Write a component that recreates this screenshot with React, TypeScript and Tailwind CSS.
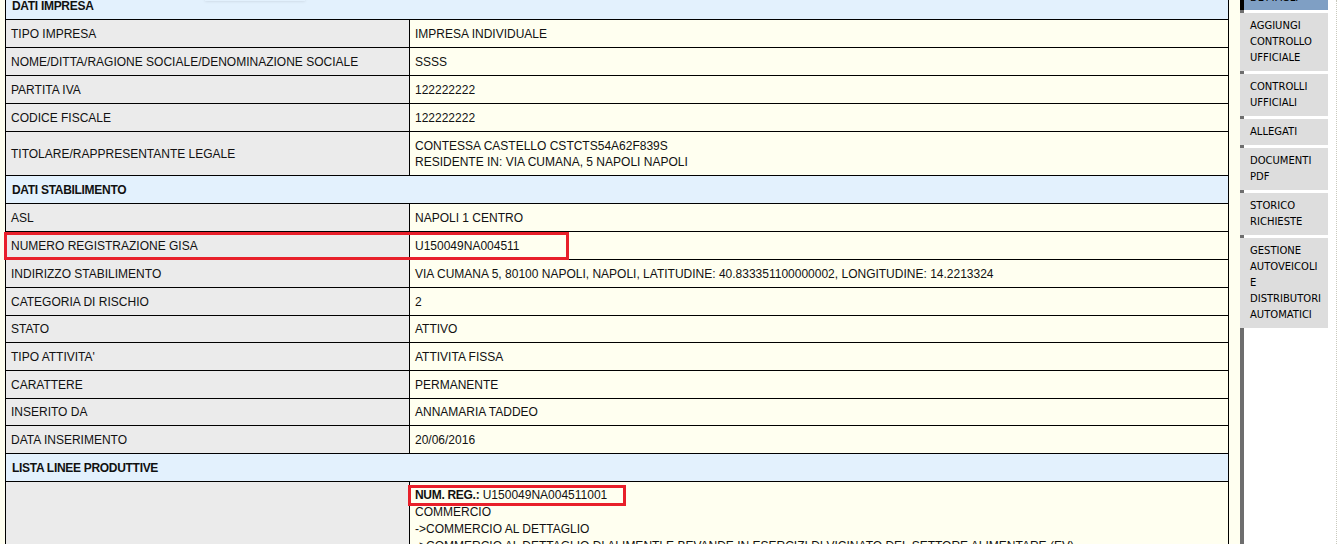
import React from "react";

type Row =
  | { kind: "head"; title: string }
  | { kind: "row"; label: string; value: React.ReactNode; h?: string };

const rows: Row[] = [
  { kind: "head", title: "DATI IMPRESA" },
  { kind: "row", label: "TIPO IMPRESA", value: "IMPRESA INDIVIDUALE" },
  { kind: "row", label: "NOME/DITTA/RAGIONE SOCIALE/DENOMINAZIONE SOCIALE", value: "SSSS" },
  { kind: "row", label: "PARTITA IVA", value: "122222222" },
  { kind: "row", label: "CODICE FISCALE", value: "122222222" },
  {
    kind: "row",
    label: "TITOLARE/RAPPRESENTANTE LEGALE",
    h: "h-[44px]",
    value: (
      <>
        CONTESSA CASTELLO CSTCTS54A62F839S
        <br />
        RESIDENTE IN: VIA CUMANA, 5 NAPOLI NAPOLI
      </>
    ),
  },
  { kind: "head", title: "DATI STABILIMENTO" },
  { kind: "row", label: "ASL", value: "NAPOLI 1 CENTRO" },
  { kind: "row", label: "NUMERO REGISTRAZIONE GISA", value: "U150049NA004511" },
  {
    kind: "row",
    label: "INDIRIZZO STABILIMENTO",
    value: "VIA CUMANA 5, 80100 NAPOLI, NAPOLI, LATITUDINE: 40.833351100000002, LONGITUDINE: 14.2213324",
  },
  { kind: "row", label: "CATEGORIA DI RISCHIO", value: "2" },
  { kind: "row", label: "STATO", value: "ATTIVO", h: "h-[27px]" },
  { kind: "row", label: "TIPO ATTIVITA'", value: "ATTIVITA FISSA" },
  { kind: "row", label: "CARATTERE", value: "PERMANENTE" },
  { kind: "row", label: "INSERITO DA", value: "ANNAMARIA TADDEO", h: "h-[27px]" },
  { kind: "row", label: "DATA INSERIMENTO", value: "20/06/2016" },
  { kind: "head", title: "LISTA LINEE PRODUTTIVE" },
];

const menu = [
  ["AGGIUNGI", "CONTROLLO", "UFFICIALE"],
  ["CONTROLLI", "UFFICIALI"],
  ["ALLEGATI"],
  ["DOCUMENTI", "PDF"],
  ["STORICO", "RICHIESTE"],
  ["GESTIONE", "AUTOVEICOLI", "E", "DISTRIBUTORI", "AUTOMATICI"],
];

const App = () => {
  return (
    <div className="relative flex h-[544px] overflow-hidden bg-[#fffff0] text-[12px] text-[#111] font-['Liberation_Sans',Arial,sans-serif]">
      {/* scheda stabilimento */}
      <div className="w-[1229px] shrink-0 pl-[5px] -mt-[9px]">
        <table className="w-full border-collapse border border-black">
          <tbody>
            {rows.map((r, i) =>
              r.kind === "head" ? (
                <tr key={i} className="h-[28px]">
                  <td
                    colSpan={2}
                    className="border border-black bg-[#e3f1fd] pl-[6px] font-bold tracking-[-0.3px] font-['Liberation_Sans_Narrow','Liberation_Sans',sans-serif] text-[12px]"
                  >
                    {r.title}
                  </td>
                </tr>
              ) : (
                <tr key={i} className={r.h ?? "h-[28px]"}>
                  <td className="w-[404px] border border-black bg-[#ebebeb] pl-[5px] leading-[16px]">
                    {r.label}
                  </td>
                  <td className="border border-black bg-[#fffff0] pl-[5px] leading-[16px]">{r.value}</td>
                </tr>
              )
            )}
            <tr>
              <td className="w-[404px] border border-black bg-[#ebebeb]" />
              <td className="border border-black bg-[#fffff0] pl-[5px] pt-[5px] leading-[17px] align-top">
                <span className="font-bold tracking-[-0.3px] font-['Liberation_Sans_Narrow','Liberation_Sans',sans-serif]">
                  NUM. REG.:
                </span>{" "}
                U150049NA004511001
                <br />
                COMMERCIO
                <br />
                -&gt;COMMERCIO AL DETTAGLIO
                <br />
                -&gt;COMMERCIO AL DETTAGLIO DI ALIMENTI E BEVANDE IN ESERCIZI DI VICINATO DEL SETTORE ALIMENTARE (EV)
              </td>
            </tr>
          </tbody>
        </table>
      </div>

      {/* menu laterale */}
      <div className="ml-[11px] flex w-[97px] shrink-0 border-l-4 border-[#6e6e6e] bg-white">
        <div className="-ml-[4px] flex w-[88px] flex-col gap-[3px] -mt-[18px] font-['DejaVu_Sans',Verdana,sans-serif] text-[10px] leading-[16px] text-black">
          <div className="border-l-4 border-black bg-[#7f9fc4] pl-[6px] pt-[8px] pb-[4px]">DETTAGLI</div>
          {menu.map((lines, i) => (
            <div key={i} className="bg-[#dddddd] pl-[10px] py-[5px]">
              {lines.map((l) => (
                <div key={l}>{l}</div>
              ))}
            </div>
          ))}
        </div>
        <div className="ml-auto w-px border-r border-dotted border-[#c9c9bd]" />
      </div>

      {/* evidenziazioni */}
      <div className="pointer-events-none absolute left-[4px] top-[232px] h-[28px] w-[565px] border-[3px] border-[#e8202a]" />
      <div className="pointer-events-none absolute left-[408px] top-[485px] h-[21px] w-[218px] border-[3px] border-[#e8202a]" />
      <div className="pointer-events-none absolute left-[205px] top-0 h-px w-[100px] shadow-[0_0_3px_rgba(0,0,0,0.25)]" />
    </div>
  );
};

export default App;
